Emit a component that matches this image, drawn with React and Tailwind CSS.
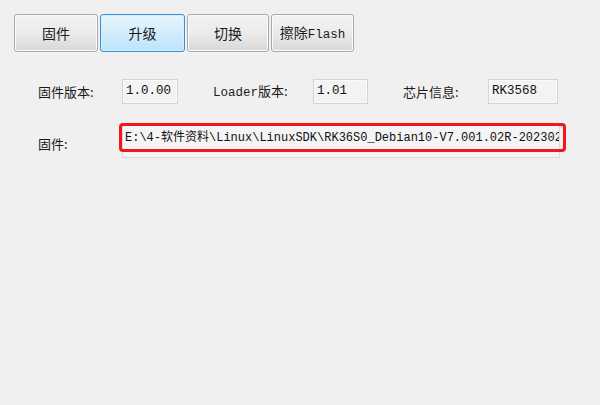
import React from 'react';

const MONO = { fontFamily: '"Liberation Mono", "Noto Sans CJK SC", monospace' };
const CJK = { fontFamily: '"Noto Sans CJK SC", "Liberation Sans", sans-serif' };

const TabButton = ({ label, active, width }) => (
  <div
    className={`h-[38px] flex items-center justify-center rounded-[3px] border text-[14px] text-[#1a1a1a] ${
      active
        ? 'border-[#3c8fd0] bg-gradient-to-b from-[#e8f5fd] to-[#bde3fa] shadow-[inset_0_0_0_1px_#d6efff]'
        : 'border-[#a9a9a9] bg-gradient-to-b from-[#f3f3f3] via-[#ebebeb] to-[#d8d8d8] shadow-[inset_0_0_0_1px_#fbfbfb]'
    } ${width}`}
    style={CJK}
  >
    {label}
  </div>
);

const ValueBox = ({ value, width }) => (
  <div
    className={`h-[25px] flex items-center px-[3px] border border-[#d3d3d3] bg-[#f3f3f3] shadow-[inset_0_0_0_1px_#fafafa] text-[12.5px] text-[#111] ${width}`}
    style={MONO}
  >
    {value}
  </div>
);

const Label = ({ children, width }) => (
  <div className={`text-[13px] text-[#1a1a1a] ${width}`} style={CJK}>
    {children}
  </div>
);

export default function App() {
  return (
    <div className="w-[600px] h-[405px] bg-[#f0f0f0] overflow-hidden">
      {/* tabs */}
      <div className="flex gap-[2px] pl-[14px] pt-[14px]">
        <TabButton label="固件" width="w-[84px]" />
        <TabButton label="升级" width="w-[85px]" active />
        <TabButton label="切换" width="w-[82px]" />
        <TabButton
          label={
            <span>
              擦除<span style={MONO} className="text-[12.5px]">Flash</span>
            </span>
          }
          width="w-[83px]"
        />
      </div>

      {/* version info */}
      <div className="flex items-center pl-[38px] mt-[27px]">
        <Label width="w-[84px]">固件版本:</Label>
        <ValueBox value="1.0.00" width="w-[56px]" />
        <div className="w-[35px]" />
        <div className="w-[100px] text-[13px] text-[#1a1a1a]" style={MONO}>
          <span className="text-[12.5px]">Loader</span>
          <span style={CJK}>版本:</span>
        </div>
        <ValueBox value="1.01" width="w-[55px]" />
        <div className="w-[35px]" />
        <Label width="w-[85px]">芯片信息:</Label>
        <ValueBox value="RK3568" width="w-[70px]" />
      </div>

      {/* firmware path */}
      <div className="flex pl-[38px] mt-[19px]">
        <Label width="w-[84px] pt-[11px]">固件:</Label>
        <div className="relative">
          <div
            className="w-[438px] h-[35px] pl-[2px] pt-[5px] border border-[#dadada] bg-[#f4f4f4] overflow-hidden whitespace-nowrap text-[12px] text-[#111]"
            style={MONO}
          >
            E:\4-软件资料\Linux\LinuxSDK\RK36S0_Debian10-V7.001.02R-202302
          </div>
          <div className="absolute left-[-3px] top-0 w-[447px] h-[29px] border-[3px] border-[#f01818] rounded-[4px]" />
        </div>
      </div>
    </div>
  );
}
